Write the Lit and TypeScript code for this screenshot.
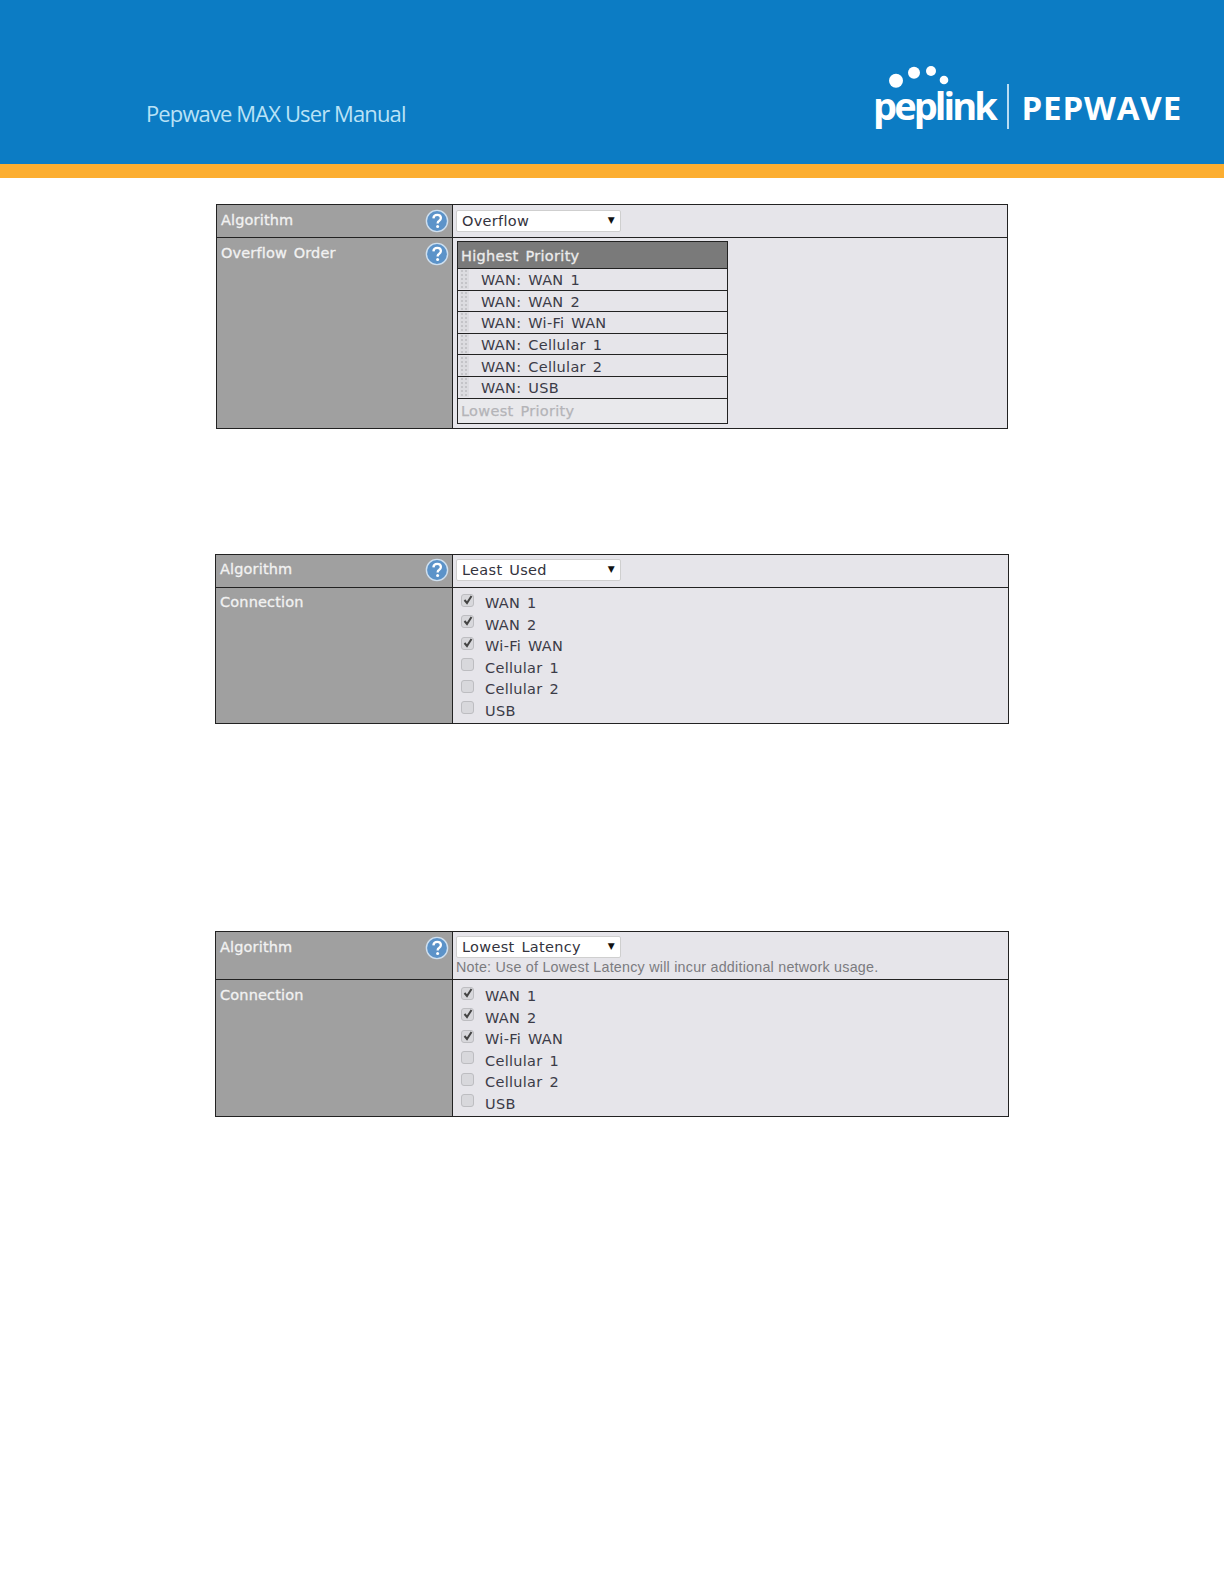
import { LitElement, html, css, nothing } from "lit";
import { customElement } from "lit/decorators.js";

const help = html`<svg class="help" viewBox="0 0 24 24" width="24" height="24" aria-hidden="true">
  <circle cx="12" cy="12" r="10.6" fill="#5c93c9" stroke="#cfe0f0" stroke-width="1.4"></circle>
  <path d="M8.4 9.4c.2-2.3 1.8-3.5 3.8-3.5 2.1 0 3.7 1.2 3.7 3.1 0 1.5-.9 2.3-1.9 3-.9.6-1.3 1-1.3 2v.4" fill="none" stroke="#fff" stroke-width="2.3"></path>
  <circle cx="12.6" cy="17.6" r="1.5" fill="#fff"></circle>
</svg>`;

const conns: [string, boolean][] = [
  ["WAN 1", true], ["WAN 2", true], ["Wi-Fi WAN", true],
  ["Cellular 1", false], ["Cellular 2", false], ["USB", false],
];
const order = ["WAN: WAN 1", "WAN: WAN 2", "WAN: Wi-Fi WAN", "WAN: Cellular 1", "WAN: Cellular 2", "WAN: USB"];

@customElement("app-root")
export class AppRoot extends LitElement {
  static styles = css`
    :host { display: block; width: 1224px; height: 1584px; background: #fff; font-family: "DejaVu Sans", sans-serif; overflow: hidden; }
    .banner { height: 164px; background: #0c7cc4; display: flex; align-items: flex-start; justify-content: space-between; box-sizing: border-box; padding: 0 42px 0 146px; }
    .stripe { height: 14px; background: #fcae31; }
    .title { margin-top: 99px; font: 22px/28px "Open Sans", sans-serif; color: #b9e2f6; letter-spacing: -0.88px; }
    .logo { display: flex; align-items: flex-start; color: #fff; }
    .brand { position: relative; width: 122px; height: 130px; }
    .brand svg { position: absolute; left: 15px; top: 64px; }
    .peplink { position: absolute; left: -1px; top: 80px; font: 700 38px/50px "Open Sans", sans-serif; letter-spacing: -2.9px; }
    .rule { width: 1.5px; height: 45px; background: #b9dcf2; margin: 84px 13px 0 11px; }
    .pepwave { margin-top: 86px; font: 700 33px/44px "Open Sans", sans-serif; letter-spacing: 0.85px; }

    .tbl { display: grid; grid-template-columns: 236px 1fr; border: 1px solid #222; box-sizing: border-box; width: 794px; background: #222; gap: 1px; font-size: 14.5px; }
    .t1 { margin: 26px 0 0 216px; width: 792px; grid-template-columns: 235px 1fr; }
    .t2 { margin: 125px 0 0 215px; }
    .t3 { margin: 207px 0 0 215px; }
    .lab { background: #a0a0a0; color: #f2f2f2; font-weight: 400; letter-spacing: 0.15px; word-spacing: 2px; -webkit-text-stroke: 0.3px #f2f2f2; padding: 5px 4px 0 4px; display: flex; justify-content: space-between; align-items: flex-start; line-height: 18px; box-sizing: border-box; }
    .t1 .lab, .t3 .lab { padding-top: 6px; }
    .help { margin: -2px -1px 0 0; flex: none; }
    .val { background: #e6e5ea; color: #3b3b47; letter-spacing: 0.3px; word-spacing: 2px; padding: 4px 3px 3px; box-sizing: border-box; line-height: 18px; }
    .t1 .val.top { padding-top: 5px; }
    .t1 .val.ord { padding: 3px 4px; }
    .sel { width: 165px; height: 22px; box-sizing: border-box; background: #fff; border: 1.5px solid #cfcfcf; border-radius: 2px; padding: 0 5px; display: flex; align-items: center; justify-content: space-between; color: #33333d; }
    .caret { font-size: 9px; color: #111; margin-right: 0; margin-top: -3px; }
    .note { font: 14.3px/18px "Liberation Sans", sans-serif; letter-spacing: 0.23px; word-spacing: 0; color: #7b7b7f; margin-top: 0; }

    .list { width: 271px; border: 1px solid #222; box-sizing: border-box; background: #222; display: flex; flex-direction: column; gap: 1px; }
    .list > div { box-sizing: border-box; display: flex; align-items: center; }
    .hi { height: 26px; background: #7a7a7a; color: #ececec; padding: 2px 3px 0; -webkit-text-stroke: 0.3px #ececec; }
    .it { height: 20.6px; background: #e6e5ea; color: #3b3b47; padding-top: 2px; }
    .grip { width: 9px; height: 20px; margin: -2px 12px 0 2px; flex: none; background-image: radial-gradient(#c4c4c8 1.1px, transparent 1.3px); background-size: 4px 4px; background-color: #dcdce0; }
    .lo { height: 24.4px; background: #e9e9ec; color: #b4b4b8; padding: 0 3px 0; -webkit-text-stroke: 0.25px #b4b4b8; }

    .checks { display: flex; flex-direction: column; padding: 4.5px 0 0 8px; }
    .t3 .checks { padding-top: 5.5px; }
    .chk { height: 21.5px; display: flex; align-items: center; }
    .box { width: 13px; height: 13px; box-sizing: border-box; background: #d8d8dc; border: 1px solid #bdbdc1; border-radius: 3px; margin: -6px 11px 0 0; flex: none; display: block; position: relative; }
    .box svg { position: absolute; left: 0; top: -1px; }
  `;

  private sel(t: string) {
    return html`<div class="sel"><span>${t}</span><span class="caret">▼</span></div>`;
  }

  private connRow(h: number) {
    return html`<div class="lab" style="height:${h}px"><span>Connection</span></div>
      <div class="val checks">
        ${conns.map(([n, on]) => html`<div class="chk"><span class="box">${on
          ? html`<svg width="12" height="12" viewBox="0 0 12 12"><path d="M2.5 6l2.5 3 4.5-7" fill="none" stroke="#444" stroke-width="2"></path></svg>`
          : nothing}</span><span>${n}</span></div>`)}
      </div>`;
  }

  render() {
    return html`
      <div class="banner">
        <div class="title">Pepwave MAX User Manual</div>
        <div class="logo">
          <div class="brand">
            <svg width="70" height="28" viewBox="0 0 70 28" fill="#fff">
              <circle cx="7" cy="16.7" r="7"></circle><circle cx="25" cy="8.7" r="6"></circle><circle cx="42" cy="7" r="5"></circle><circle cx="55" cy="16" r="4.3"></circle>
            </svg>
            <div class="peplink">peplink</div>
          </div>
          <div class="rule"></div>
          <div class="pepwave">PEPWAVE</div>
        </div>
      </div>
      <div class="stripe"></div>

      <div class="tbl t1">
        <div class="lab" style="height:32px"><span>Algorithm</span>${help}</div>
        <div class="val top">${this.sel("Overflow")}</div>
        <div class="lab" style="height:190px"><span>Overflow Order</span>${help}</div>
        <div class="val ord">
          <div class="list">
            <div class="hi">Highest Priority</div>
            ${order.map((o) => html`<div class="it"><span class="grip"></span>${o}</div>`)}
            <div class="lo">Lowest Priority</div>
          </div>
        </div>
      </div>

      <div class="tbl t2">
        <div class="lab" style="height:32px"><span>Algorithm</span>${help}</div>
        <div class="val top">${this.sel("Least Used")}</div>
        ${this.connRow(135)}
      </div>

      <div class="tbl t3">
        <div class="lab" style="height:47px"><span>Algorithm</span>${help}</div>
        <div class="val top">${this.sel("Lowest Latency")}<div class="note">Note: Use of Lowest Latency will incur additional network usage.</div></div>
        ${this.connRow(136)}
      </div>
    `;
  }
}
